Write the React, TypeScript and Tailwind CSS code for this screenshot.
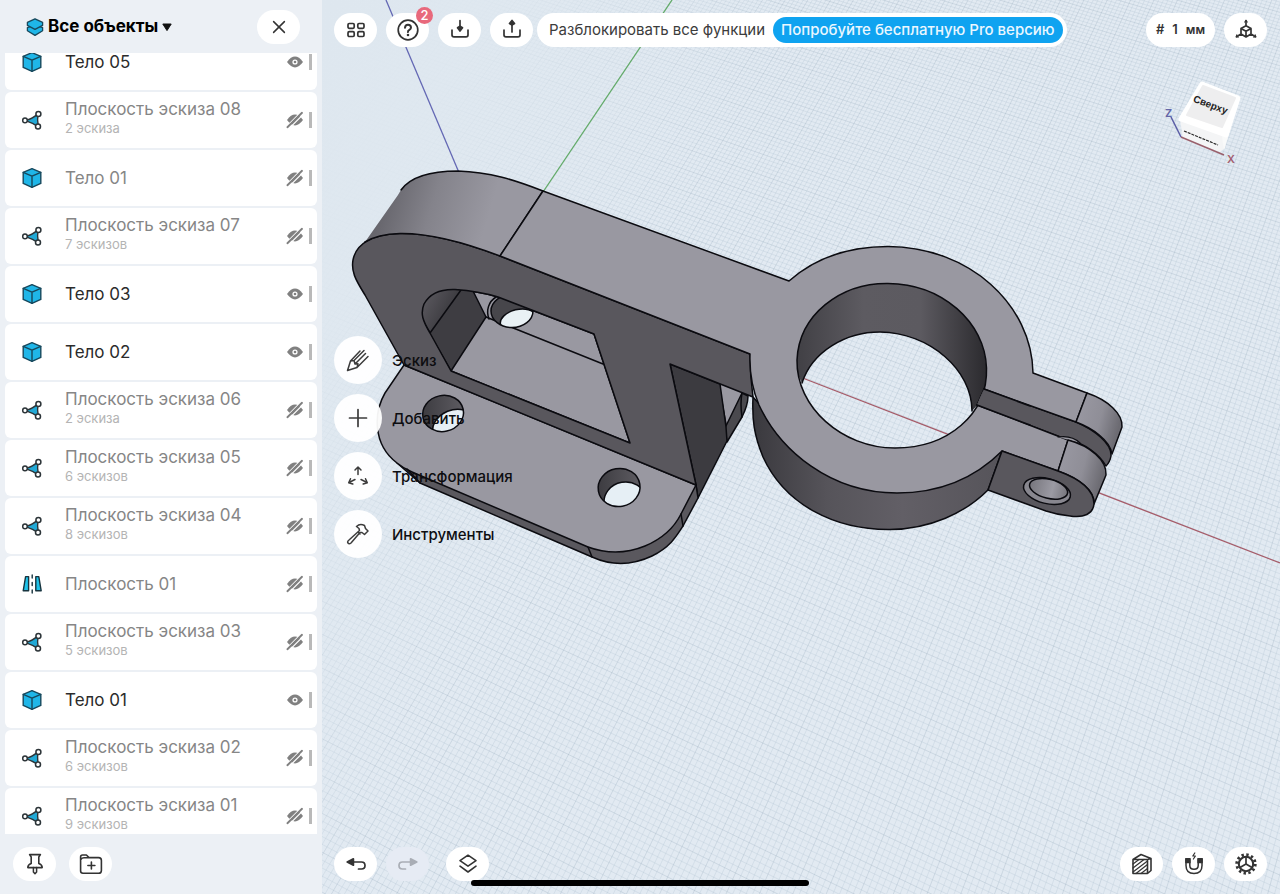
import type { ReactNode } from "react";

type RowKind = "body" | "sketch" | "plane";

type SceneItem = {
  kind: RowKind;
  name: string;
  note?: string;
  visible?: boolean;
};

const items: SceneItem[] = [
  { kind: "body", name: "Тело 05", visible: true },
  { kind: "sketch", name: "Плоскость эскиза 08", note: "2 эскиза" },
  { kind: "body", name: "Тело 01" },
  { kind: "sketch", name: "Плоскость эскиза 07", note: "7 эскизов" },
  { kind: "body", name: "Тело 03", visible: true },
  { kind: "body", name: "Тело 02", visible: true },
  { kind: "sketch", name: "Плоскость эскиза 06", note: "2 эскиза" },
  { kind: "sketch", name: "Плоскость эскиза 05", note: "6 эскизов" },
  { kind: "sketch", name: "Плоскость эскиза 04", note: "8 эскизов" },
  { kind: "plane", name: "Плоскость 01" },
  { kind: "sketch", name: "Плоскость эскиза 03", note: "5 эскизов" },
  { kind: "body", name: "Тело 01", visible: true },
  { kind: "sketch", name: "Плоскость эскиза 02", note: "6 эскизов" },
  { kind: "sketch", name: "Плоскость эскиза 01", note: "9 эскизов" },
];

function Icon(props: { children: ReactNode; size?: string; box?: string }) {
  return (
    <svg
      className={props.size ?? "size-6"}
      viewBox={props.box ?? "0 0 24 24"}
      fill="none"
      stroke="currentColor"
      strokeWidth="1.7"
      strokeLinecap="round"
      strokeLinejoin="round"
      aria-hidden="true"
    >
      {props.children}
    </svg>
  );
}

function KindIcon({ kind }: { kind: RowKind }) {
  if (kind === "body") {
    return (
      <Icon size="size-6 text-[#17485c]">
        <path d="M12 2.6 20.8 6.4V17.4L12 21.4 3.2 17.4V6.4Z" fill="#1fb6e8" strokeWidth="1.4" />
        <path d="M3.2 6.4 12 10.2 20.8 6.4M12 10.2V21.4" strokeWidth="1.4" />
      </Icon>
    );
  }
  if (kind === "plane") {
    return (
      <Icon size="size-6 text-[#17343f]">
        <path d="M5.6 4.6H8.6V18.8H3.2Z" fill="#1fc3ea" strokeWidth="1.4" />
        <path d="M18.8 4.6H15.8V18.8H21.2Z" fill="#1fc3ea" strokeWidth="1.4" />
        <path d="M12.2 3V6M12.2 10.5V13.5M12.2 18V21" strokeWidth="1.4" />
      </Icon>
    );
  }
  return (
    <Icon size="size-6 text-[#2c3438]">
      <path d="M5 12.4Q13 10.8 18 5.4 17 12 18.4 19 13 15 5 12.4Z" fill="#22a9d6" strokeWidth="1.4" />
      <circle cx="5" cy="12.4" r="2.3" fill="#fff" strokeWidth="1.5" />
      <circle cx="18.4" cy="6" r="2.5" fill="#fff" strokeWidth="1.5" />
      <circle cx="18" cy="18.4" r="2.5" fill="#fff" strokeWidth="1.5" />
    </Icon>
  );
}

function EyeIcon({ visible }: { visible?: boolean }) {
  return (
    <svg className="size-[18px]" viewBox="0 0 18 18" aria-hidden="true">
      <path d="M1 9Q5 3.6 9 3.6T17 9Q13 14.4 9 14.4T1 9Z" fill="#808080" />
      {visible ? (
        <>
          <circle cx="9" cy="9" r="2.6" fill="#fff" />
          <circle cx="9" cy="9" r="1.3" fill="#808080" />
        </>
      ) : (
        <>
          <path d="M0 16 15 1M3.2 17.4 18 2.6" stroke="#fff" strokeWidth="1.2" />
          <path d="M1.4 16.2 16 1.8" stroke="#808080" strokeWidth="1.9" strokeLinecap="round" />
        </>
      )}
    </svg>
  );
}

function Row({ item }: { item: SceneItem }) {
  return (
    <li className="flex h-14 shrink-0 items-center rounded-md bg-white pr-[5px] pl-[15px]">
      <KindIcon kind={item.kind} />
      <div
        className={
          item.note
            ? "ml-[21px] flex flex-1 flex-col gap-[2px] pb-1"
            : "ml-[21px] flex flex-1 flex-col"
        }
      >
        <span
          className={
            item.visible
              ? "text-[17px] leading-[18px] text-[#2b2b2b]"
              : "text-[17px] leading-[18px] text-[#868686]"
          }
        >
          {item.name}
        </span>
        {item.note && (
          <span className="text-[13px] leading-4 text-[#b4b4b4]">{item.note}</span>
        )}
      </div>
      <button aria-label="Видимость" className="mr-[5px]">
        <EyeIcon visible={item.visible} />
      </button>
      <span className="h-4 w-[3px] bg-[#b9b9b9]" />
    </li>
  );
}

function Pill(props: { label: string; children: ReactNode; faded?: boolean }) {
  return (
    <button
      aria-label={props.label}
      className={
        props.faded
          ? "relative flex h-[34px] w-[43px] shrink-0 items-center justify-center rounded-full bg-[#e6ebf4] text-[#a9adb5]"
          : "relative flex h-[34px] w-[43px] shrink-0 items-center justify-center rounded-full bg-white text-[#333]"
      }
    >
      {props.children}
    </button>
  );
}

function Sidebar() {
  return (
    <aside className="flex w-[322px] shrink-0 flex-col bg-[#ecf0f5]">
      <header className="flex h-[53px] shrink-0 items-center justify-between pr-[22px] pl-[26px]">
        <button className="flex items-center pt-px text-[17px] font-bold text-black">
          <Icon size="mr-1 size-[18px] text-[#17485c]" box="0 0 18 18">
            <path d="M1.4 12.8V9.6L9 7 16.6 9.6V12.8L9 17.4Z" fill="#1fb6e8" strokeWidth="1.3" />
            <path d="M9 .8 16.6 4.4V7.4L9 11.4 1.4 7.4V4.4Z" fill="#1fb6e8" strokeWidth="1.3" />
          </Icon>
          Все объекты
          <svg className="ml-1 size-[10px]" viewBox="0 0 10 10" aria-hidden="true">
            <path d="M.8 2H9.2L5 8.6Z" fill="#111" stroke="#111" strokeLinejoin="round" />
          </svg>
        </button>
        <Pill label="Закрыть">
          <Icon size="size-4" box="0 0 16 16">
            <path d="M2.6 2.6 13.4 13.4M13.4 2.6 2.6 13.4" strokeWidth="1.5" />
          </Icon>
        </Pill>
      </header>
      <div className="min-h-0 flex-1 overflow-hidden pr-[5px] pl-[5px]">
        <ul className="-mt-[19px] flex flex-col gap-[2px]">
          {items.map((item, i) => (
            <Row key={i} item={item} />
          ))}
        </ul>
      </div>
      <footer className="flex h-[60px] shrink-0 items-center gap-[13px] pl-[13px]">
        <Pill label="Закрепить">
          <Icon>
            <path d="M6.6 2.6H17.4L15.8 5V11.4Q19.2 12.6 19.2 15.6H4.8Q4.8 12.6 8.2 11.4V5Z" strokeWidth="1.6" />
            <path d="M10.4 15.6V20L12 21.8 13.6 20V15.6" strokeWidth="1.5" />
          </Icon>
        </Pill>
        <Pill label="Новая папка">
          <Icon>
            <path d="M1.6 19V5Q1.6 3 3.6 3H7.4L10 5.6H19.6Q22.4 5.6 22.4 8.4V18.4Q22.4 21.2 19.6 21.2H4Q1.6 21.2 1.6 19ZM1.8 7.4Q3 5.8 5 5.8H10M12.4 10V17M8.9 13.5H15.9" strokeWidth="1.6" />
          </Icon>
        </Pill>
      </footer>
    </aside>
  );
}

// Ground grid: both line families meet in their own vanishing point
const origin = [499, 259];
const farX = [-4150, -1548];
const farY = [2086, -2111];

function project(u: number, v: number) {
  const a = -0.00086 * u;
  const b = -0.0016 * v;
  const w = 1 + a + b;
  const x = (origin[0] + a * farX[0] + b * farY[0]) / w;
  const y = (origin[1] + a * farX[1] + b * farY[1]) / w;
  return x.toFixed(1) + " " + y.toFixed(1);
}

function gridPath(major: boolean) {
  let d = "";
  for (let u = -150; u <= 380; u++) {
    if ((u % 5 === 0) === major) d += `M${project(u, -180)}L${project(u, 220)}`;
  }
  for (let v = -180; v <= 220; v++) {
    if ((v % 5 === 0) === major) d += `M${project(-150, v)}L${project(380, v)}`;
  }
  return d;
}

const minorGrid = gridPath(false);
const majorGrid = gridPath(true);

const windowPath =
  "M451 371 430 333C423 321 420 314 424 304C430 293 441 289 455 289.5C470 290.5 485 293 498 297L594 334 630 443Z";
const facePath =
  "M404 365 365 295C355 279 351 271 353 260C356 244 372 234 400 233.5C432 233 466 243 500 256L750 354Q750 376 753 397L670 364 696 485Z";
const ringHole =
  "M797 360C799 315 840 283 888 283.5C942 284 985 322 986.5 368C988 414 948 448 895 448C842 448 796 407 797 360Z";

function Viewport() {
  return (
    <svg
      className="absolute inset-0 size-full"
      viewBox="322 0 958 894"
      preserveAspectRatio="xMidYMid slice"
      aria-hidden="true"
    >
      <defs>
        <linearGradient id="haze" x1="322" y1="0" x2="700" y2="190" gradientUnits="userSpaceOnUse">
          <stop offset="0" stopColor="#dee7ef" />
          <stop offset=".35" stopColor="#dfe8f0" stopOpacity=".9" />
          <stop offset="1" stopColor="#dfe8f0" stopOpacity="0" />
        </linearGradient>
        <linearGradient id="bend" x1="380" y1="215" x2="480" y2="245" gradientUnits="userSpaceOnUse">
          <stop offset="0" stopColor="#67666d" />
          <stop offset=".45" stopColor="#84838b" />
          <stop offset="1" stopColor="#9998a1" />
        </linearGradient>
        <linearGradient id="bore" x1="797" y1="0" x2="987" y2="0" gradientUnits="userSpaceOnUse">
          <stop offset="0" stopColor="#414045" />
          <stop offset=".35" stopColor="#5d5b61" />
          <stop offset=".65" stopColor="#5c5a60" />
          <stop offset="1" stopColor="#2b2a2e" />
        </linearGradient>
        <linearGradient id="rim" x1="753" y1="0" x2="1002" y2="0" gradientUnits="userSpaceOnUse">
          <stop offset="0" stopColor="#3a393e" />
          <stop offset=".3" stopColor="#56545a" />
          <stop offset=".6" stopColor="#625f66" />
          <stop offset="1" stopColor="#56545a" />
        </linearGradient>
        <linearGradient id="ear" x1="0" y1="0" x2="1" y2=".35">
          <stop offset="0" stopColor="#9b9aa4" />
          <stop offset=".6" stopColor="#8f8e97" />
          <stop offset="1" stopColor="#6c6b72" />
        </linearGradient>
        <linearGradient id="drill" x1="0" y1="0" x2="1" y2="0">
          <stop offset="0" stopColor="#3b3a3f" />
          <stop offset="1" stopColor="#5f5d63" />
        </linearGradient>
        <linearGradient id="bolt" x1="0" y1="0" x2="1" y2="0">
          <stop offset="0" stopColor="#77767d" />
          <stop offset=".6" stopColor="#9b9aa3" />
          <stop offset="1" stopColor="#77767d" />
        </linearGradient>
        <linearGradient id="inside" x1="422" y1="300" x2="450" y2="315" gradientUnits="userSpaceOnUse">
          <stop offset="0" stopColor="#5a585e" />
          <stop offset="1" stopColor="#3b3a3f" />
        </linearGradient>
        <clipPath id="window">
          <path d={windowPath} />
        </clipPath>
        <clipPath id="hole1">
          <ellipse cx="443" cy="413.5" rx="20.5" ry="18" transform="rotate(-12 443 413)" />
        </clipPath>
        <clipPath id="hole2">
          <ellipse cx="619" cy="487.5" rx="21" ry="19" transform="rotate(-10 619 487)" />
        </clipPath>
        <clipPath id="hole3">
          <ellipse cx="512" cy="311" rx="21" ry="16.5" />
        </clipPath>
      </defs>

      <rect x="322" width="958" height="894" fill="#e2eaf2" />
      <path d={minorGrid} stroke="#a9bccb" strokeOpacity=".36" strokeWidth=".7" />
      <path d={majorGrid} stroke="#94a9b9" strokeOpacity=".36" strokeWidth=".8" />
      <rect x="322" width="958" height="894" fill="url(#haze)" />
      <path d="M386 0 460 175" stroke="#6468b4" strokeWidth="1.3" />
      <path d="M672 0 543 192" stroke="#62ab68" strokeWidth="1.3" />
      <path d="M800 377 1280 563" stroke="#a65b68" strokeWidth="1.3" />

      <g stroke="#0b0b10" strokeWidth="1.5" strokeLinejoin="round" strokeLinecap="round" fill="none">
        {/* flange */}
        <path d="M718 380 744 391 727 430Z" fill="#9998a1" />
        <path d="M742 393 748 396Q748 405 742 417L727 442 725 428Z" fill="#4a494e" />
        <path d="M742 393Q740 403 742 417" />
        <path d="M670 364 720 384 726 427 727 441 698 498 696 485Z" fill="#3c3b40" />
        <path
          d="M397 463 420 483 592 557C612 566 633 565 652 556C670 547 676 537 683 526L698 498 696 485 600 500Z"
          fill="#5a585e"
        />
        <path
          d="M404 365 385 393C374 412 372 444 397 463Q403 468 412 472L588 547C610 555 628 553 645 546C664 538 675 526 681 514L696 485Z"
          fill="#9998a1"
        />
        <path d="M588 547 592 557M681 514 683 526M407 469 420 483" />
        <g clipPath="url(#hole1)">
          <rect x="420" y="392" width="46" height="44" fill="url(#drill)" stroke="none" />
          <ellipse cx="454" cy="427" rx="22" ry="17" transform="rotate(-22 454 427)" fill="#e6eff5" />
        </g>
        <ellipse cx="443" cy="413.5" rx="20.5" ry="18" transform="rotate(-12 443 413)" />
        <g clipPath="url(#hole2)">
          <rect x="596" y="465" width="46" height="46" fill="url(#drill)" stroke="none" />
          <ellipse cx="625" cy="501" rx="21" ry="19" transform="rotate(-10 625 501)" fill="#e6eff5" />
        </g>
        <ellipse cx="619" cy="487.5" rx="21" ry="19" transform="rotate(-10 619 487)" />

        {/* bracket face and what shows through its opening */}
        <path d={facePath} fill="#59575d" />
        <g clipPath="url(#window)">
          <path d={windowPath} fill="#9998a1" />
          <path d="M451 371 486 317 473 291 440 270 410 300Z" fill="#3e3d42" />
          <path d="M430 333 461 290 440 270 410 300Z" fill="url(#inside)" />
          <path d="M486 317 603 364" />
          <path d="M496 297C488 302 486 311 489 319" />
          <g clipPath="url(#hole3)">
            <rect x="488" y="292" width="48" height="38" fill="#47464b" stroke="none" />
            <ellipse cx="518" cy="320" rx="18" ry="10.5" transform="rotate(-14 518 320)" fill="#e9f1f5" />
          </g>
          <ellipse cx="512" cy="311" rx="21" ry="16.5" />
        </g>
        <path d={windowPath} />

        {/* bend at the left end */}
        <path
          d="M365 242 398 195C408 177 430 171 458 171C490 172 515 180 543 191L500 256C466 243 432 233 400 233.5C385 234 373 237 365 242Z"
          fill="url(#bend)"
          stroke="none"
        />
        <path d="M401 190C411 176 432 171 458 171C490 172 515 180 543 191L500 256C466 243 432 233 400 233.5C385 234 373 237 365 242" />

        {/* clamp ring */}
        <path
          d="M753 397C752 420 754 435 763 457C785 505 835 530 890 529.5C930 529 965 513 988 490L1002 451 900 480 800 450Z"
          fill="url(#rim)"
        />
        <path d="M802 383C812 352 845 332 880 332C930 333 972 370 972 411L986 395 1000 350 930 270 840 270 780 340Z" fill="url(#bore)" stroke="none" />
        <path d="M802 383C812 352 845 332 880 332C930 333 972 370 972 411" />
        <path d="M977 405 984 389 1076 422C1095 430 1112 444 1111 456Q1110 462 1106 466C1100 455 1085 443 1068 440Z" fill="#59575d" />
        <path
          fillRule="evenodd"
          d={
            "M543 191 789 281C815 258 850 246.5 888 246.5C970 247 1032 305 1033 373L1087 393 1076 422 984 389 977 405 1068 440 1058 471 1002 451C975 478 940 493 897 493C830 493 780 450 759 405Q749 381 750 354L500 256Z" +
            ringHole
          }
          fill="#9998a1"
          stroke="none"
        />
        <path d="M500 256 543 191 789 281C815 258 850 246.5 888 246.5C970 247 1032 305 1033 373L1087 393 1076 422 984 389M977 405 1068 440 1058 471 1002 451C975 478 940 493 897 493C830 493 780 450 759 405Q749 381 750 354L500 256" />
        <path d={ringHole} />
        <path d="M977 405 984 389 1030 406 1030 425Z" fill="#59575d" stroke="none" />
        <path d="M1030 406 984 389M977 405 1030 425" />

        {/* clamp ears */}
        <path d="M1087 393C1108 400 1123 414 1122 427L1112 454C1110 440 1092 428 1076 422Z" fill="url(#ear)" />
        <path d="M1058 437Q1072 435 1080 443" fill="#9998a1" strokeWidth="1.2" />
        <path d="M1068 440C1090 446 1107 460 1106 475L1094 504C1095 490 1078 478 1058 471Z" fill="url(#ear)" />
        <path d="M1002 451 1058 471C1080 479 1094 490 1094 504C1093 514 1084 518 1070 516Q1058 515 1046 511L988 490Z" fill="#59575d" />
        <g transform="rotate(14 1047 491)">
          <ellipse cx="1047" cy="491" rx="24" ry="12.5" fill="#88878f" />
          <ellipse cx="1048" cy="488.5" rx="19.5" ry="9.5" fill="url(#bolt)" />
        </g>
      </g>
    </svg>
  );
}

function ViewCube() {
  return (
    <svg
      className="absolute top-[72px] right-[25px] h-[100px] w-[100px]"
      viewBox="1155 72 100 100"
      role="img"
      aria-label="Куб вида"
    >
      <path d="M1180 119 1227 131 1225 148 1220 152 1183 139Z" fill="#f4f5f6" />
      <path d="M1240 96 1230 131 1224 150 1221 130Z" fill="#f9fafa" />
      <path
        d="M1202 84 1238 98 1226 135 1181 119Z"
        fill="#fff"
        stroke="#fff"
        strokeWidth="5"
        strokeLinejoin="round"
      />
      <path d="M1203 86 1235 98 1222 127 1187 115Z" fill="#eeeeef" stroke="#eeeeef" strokeWidth="2" strokeLinejoin="round" />
      <text
        x="1210"
        y="108"
        textAnchor="middle"
        transform="rotate(21 1210 106)"
        className="font-['Liberation_Sans'] text-[10px] font-bold"
        fill="#1f1f1f"
      >
        Сверху
      </text>
      <path d="M1184 131 1218 145" stroke="#2b2b2b" strokeWidth="1.2" strokeDasharray="3 1" />
      <path d="M1171 117 1181 137" stroke="#5c5ea6" strokeWidth="1.5" />
      <path d="M1181 137 1224 155" stroke="#99606c" strokeWidth="1.5" />
      <text x="1165" y="117" className="font-['Inter'] text-[11px] font-semibold" fill="#6466a8">
        Z
      </text>
      <text x="1227" y="163" className="font-['Inter'] text-[11px] font-semibold" fill="#a35f70">
        X
      </text>
    </svg>
  );
}

const tools = [
  {
    label: "Эскиз",
    icon: (
      <path d="M1.5 22.5 4.5 13 14 3M1.5 22.5 11 19.5 22 8.5M4.5 13 8 12.5 9 16 12 15.8 11 19.5M8 12.5 18 2.5M9 16 19.5 5.5M1.5 22.5 3 18" strokeWidth="1.5" />
    ),
  },
  { label: "Добавить", icon: <path d="M12 3.5V20.5M3.5 12H20.5" /> },
  {
    label: "Трансформация",
    icon: (
      <path d="M12 10.5V3M9 6 12 3 15 6M9 15.5 3 18.5M4.5 14.8 2.7 18.7 6.8 20M15 15.5 21 18.5M19.5 14.8 21.3 18.7 17.2 20" strokeWidth="1.5" />
    ),
  },
  {
    label: "Инструменты",
    icon: (
      <path d="M10.5 4.5Q14 1 18.5 3.5L19.5 6.5 22 9 18.5 12.5 16 10.5 14 10.5 5 21Q3 22.5 2 21T3 18L13.5 8.5 13 6.5ZM12 10 14 12" strokeWidth="1.5" />
    ),
  },
];

export default function App() {
  return (
    <div className="flex h-screen overflow-hidden font-['Inter',sans-serif]">
      <Sidebar />
      <main className="relative flex min-w-0 flex-1 flex-col bg-[#e1eaf1]">
        <Viewport />
        <ViewCube />
        <header className="relative flex shrink-0 items-start pt-[13px] pr-[13px] pl-3">
          <div className="flex gap-[9px]">
            <Pill label="Проекты">
              <Icon size="size-5" box="0 0 20 20">
                <rect x="2" y="3.5" width="6.2" height="4.8" rx="1.2" />
                <rect x="11.8" y="3.5" width="6.2" height="4.8" rx="1.2" />
                <rect x="2" y="11.7" width="6.2" height="4.8" rx="1.2" />
                <rect x="11.8" y="11.7" width="6.2" height="4.8" rx="1.2" />
              </Icon>
            </Pill>
            <Pill label="Справка">
              <Icon>
                <circle cx="12" cy="12" r="9.8" strokeWidth="1.7" />
                <path d="M9 9.7Q9.2 6.8 12 6.8T15 9.5Q15 11 13.4 11.8T12 14" strokeWidth="2" />
                <circle cx="12" cy="17" r=".7" fill="currentColor" strokeWidth="1.2" />
              </Icon>
              <span className="absolute -top-[6px] -right-[4px] flex size-[17px] items-center justify-center rounded-full bg-[#e8697c] text-[13px] font-medium text-white">
                2
              </span>
            </Pill>
            <Pill label="Импорт">
              <Icon>
                <path d="M4 12V17Q4 18.8 6 18.8H18Q20 18.8 20 17V12M12 2.5V12" />
                <path d="M9.5 9.8 12 8.3 14.5 9.8 12 13Z" fill="currentColor" />
              </Icon>
            </Pill>
            <Pill label="Экспорт">
              <Icon>
                <path d="M4 12V17Q4 18.8 6 18.8H18Q20 18.8 20 17V12M12 14V5" />
                <path d="M9.5 5.5 12 2.5 14.5 5.5 12 7Z" fill="currentColor" />
              </Icon>
            </Pill>
          </div>
          <div className="ml-1 flex h-[34px] items-center rounded-full bg-white pr-1 pl-3 text-[15px] whitespace-nowrap">
            <span className="text-[#3c3c3c]">Разблокировать все функции</span>
            <button className="ml-2 h-[26px] rounded-full bg-[#0fa3f0] px-2 font-medium text-[#eaf7ff]">
              Попробуйте бесплатную Pro версию
            </button>
          </div>
          <div className="ml-auto flex gap-[9px]">
            <button className="flex h-[34px] items-center gap-2 rounded-full bg-white px-[10px] text-[13px] font-semibold text-[#333]">
              <span>#</span>
              <span>1</span>
              <span className="text-xs">мм</span>
            </button>
            <Pill label="Вид">
              <Icon>
                <path d="M12 7.8 17 10.5V16L12 19 7 16V10.5ZM7 10.5 12 13.2 17 10.5M12 13.2V19M12 7.8V2.5M7 16 2.5 18.7M17 16 21.5 18.7" strokeWidth="1.7" />
                <path d="M10.8 4 12 2.4 13.2 4M2.8 16.8 2.3 18.9 4.5 19M21.2 16.8 21.7 18.9 19.5 19" strokeWidth="1.2" />
              </Icon>
            </Pill>
          </div>
        </header>

        <nav className="relative flex flex-1 flex-col items-start justify-center gap-[10px] pl-3">
          {tools.map((tool) => (
            <button key={tool.label} className="flex items-center gap-[10px]">
              <span className="flex size-12 items-center justify-center rounded-full bg-white/95 text-[#3c3c3c]">
                <Icon>{tool.icon}</Icon>
              </span>
              <span className="pt-[2px] text-[15px] font-medium text-[#0d0d10]">{tool.label}</span>
            </button>
          ))}
        </nav>

        <footer className="relative flex shrink-0 justify-between pr-[13px] pb-[13px] pl-3">
          <div className="flex gap-[9px]">
            <Pill label="Отменить">
              <Icon>
                <path d="M8 10H17.5Q21 10 21 13.5T17.5 17H14.5" />
                <path d="M3.2 10 9.4 6.8V13.2Z" fill="currentColor" />
              </Icon>
            </Pill>
            <Pill label="Повторить" faded>
              <Icon>
                <path d="M16 10H6.5Q3 10 3 13.5T6.5 17H9.5" />
                <path d="M20.8 10 14.6 6.8V13.2Z" fill="currentColor" />
              </Icon>
            </Pill>
            <div className="ml-2">
              <Pill label="Слои">
                <Icon>
                  <path d="M12 3.2 20 8.6 12 14.2 4 8.6ZM4 14.2 12 20 20 14.2" strokeWidth="1.6" />
                </Icon>
              </Pill>
            </div>
          </div>
          <div className="flex gap-[9px]">
            <Pill label="Сечение">
              <Icon>
                <path d="M3 7.5 11 2.5 21 6.5V18.5L17.5 21.5H3ZM3 7.5H17.5V21.5M17.5 7.5 21 6.5" strokeWidth="1.6" />
                <path d="M3 12 9 7.5M3 16 14 7.5M3 20 17.5 9M6 21.5 17.5 12.5M11 21.5 17.5 16.5" strokeWidth="1.2" />
              </Icon>
            </Pill>
            <Pill label="Привязка">
              <Icon>
                <path d="M4 6.8H7.8V13.5Q7.8 17.3 12 17.3T16.2 13.5V6.8H20V13.5Q20 21.5 12 21.5T4 13.5Z" strokeWidth="1.5" />
                <path d="M4 6.8H7.8V10.5H4ZM16.2 6.8H20V10.5H16.2Z" fill="currentColor" />
                <path d="M12.8 1 10.8 4H13.4L11.4 7" strokeWidth="1.2" />
              </Icon>
            </Pill>
            <Pill label="Настройки">
              <Icon>
                <circle cx="12" cy="12" r="7.2" strokeWidth="2.1" />
                <circle cx="12" cy="12" r="9.3" strokeWidth="2.8" strokeLinecap="butt" strokeDasharray="2.4 2.469" />
                <path d="M12 12V5M12 12 18 15.5M12 12 6 15.5" strokeWidth="1.7" />
              </Icon>
            </Pill>
          </div>
        </footer>
      </main>
      <div className="absolute bottom-2 left-1/2 h-[6px] w-[338px] -translate-x-1/2 rounded-full bg-black" />
    </div>
  );
}
